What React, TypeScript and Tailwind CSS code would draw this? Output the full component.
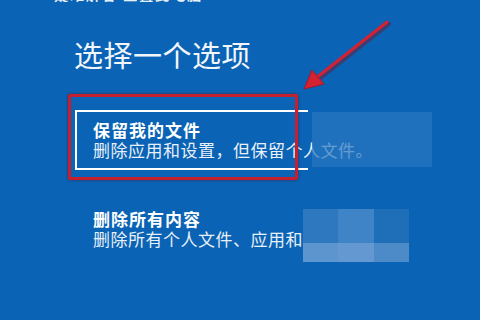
const cjk = { fontFamily: '"Noto Sans CJK SC", "Noto Sans", sans-serif' }

function Arrow() {
  return (
    <svg className="absolute left-0 top-0" width="480" height="320" viewBox="0 0 480 320">
      <line x1="389" y1="24" x2="318" y2="80" stroke="#7a1020" strokeWidth="4" strokeLinecap="round" opacity="0.45" />
      <line x1="387" y1="22" x2="316" y2="78" stroke="#d42232" strokeWidth="3" strokeLinecap="round" />
      <polygon points="304,89 312,70 324,84" fill="#d42232" stroke="#a8182a" strokeWidth="1" />
    </svg>
  )
}

export default function App() {
  return (
    <div className="relative flex h-[320px] w-[480px] flex-col overflow-hidden bg-[#0a63b4] text-white" style={cjk}>
      <div className="-mt-[14px] h-[16px] pl-[54px] text-[14px] font-bold leading-[16px] tracking-[2px] text-white/90">
        疑难解答 重置此电脑
      </div>

      <h1 className="mt-[36px] pl-[74px] text-[29px] font-normal leading-[32px] tracking-[0.5px] text-[#f2f6fb]">
        选择一个选项
      </h1>

      <div className="ml-[75px] mt-[40px] flex h-[60px] w-[233px] flex-col whitespace-nowrap border-y-2 border-l-2 border-white pl-[16px] pt-[8px]">
        <p className="text-[17px] font-bold leading-[20px] tracking-[1px]">保留我的文件</p>
        <p className="text-[17px] leading-[20px] tracking-[0.5px] text-[#e8f0f8]">删除应用和设置，但保留个人文件。</p>
      </div>

      <div className="ml-[77px] mt-[39px] flex flex-col whitespace-nowrap pl-[16px]">
        <p className="text-[17px] font-bold leading-[20px] tracking-[1px]">删除所有内容</p>
        <p className="text-[17px] leading-[20px] tracking-[0.5px] text-[#e8f0f8]">删除所有个人文件、应用和设置。</p>
      </div>

      {/* blurred patch beside first option */}
      <div className="absolute left-[312px] top-[112px] h-[55px] w-[120px] bg-[#2a78c0]/70" />

      {/* mosaic over second option */}
      <div className="absolute left-[303px] top-[209px] grid w-[106px] grid-cols-3">
        <div className="h-[34px] bg-[#2d78be]" />
        <div className="h-[34px] bg-[#3f84c6]" />
        <div className="h-[34px] bg-[#1f6eb8]" />
        <div className="h-[19px] bg-[#5d96cf]" />
        <div className="h-[19px] bg-[#6399d0]" />
        <div className="h-[19px] bg-[#4d8bc8]" />
      </div>

      {/* annotation */}
      <div className="absolute left-[68px] top-[94px] h-[86px] w-[230px] rounded-[2px] border-[3px] border-[#c42030] shadow-[0_0_3px_rgba(90,0,20,0.6)]" />
      <Arrow />
    </div>
  )
}
